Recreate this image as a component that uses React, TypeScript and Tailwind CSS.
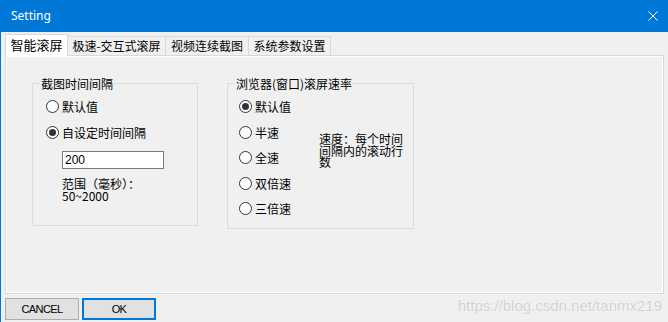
import React from 'react'

const tabs = ['极速-交互式滚屏', '视频连续截图', '系统参数设置']
const tabWidths = ['w-[98px]', 'w-[83px]', 'w-[82px]']

function Radio({ checked, label }: { checked?: boolean; label: string }) {
  return (
    <div className="flex h-[13px] items-center gap-[3px]">
      <span className="flex h-[13px] w-[13px] shrink-0 items-center justify-center rounded-full border border-[#333333] bg-white">
        {checked && <span className="h-[7px] w-[7px] rounded-full bg-[#333333]" />}
      </span>
      <span className="whitespace-nowrap text-[12px] leading-[13px]">{label}</span>
    </div>
  )
}

function GroupBox({ title, className, children }: { title: string; className: string; children: React.ReactNode }) {
  return (
    <div className={'relative shrink-0 border border-[#dcdcdc] ' + className}>
      <span className="absolute left-[7px] top-[-7px] bg-[#f0f0f0] px-[1px] text-[12px] leading-[13px] whitespace-nowrap">
        {title}
      </span>
      {children}
    </div>
  )
}

export default function App() {
  return (
    <div className="flex h-[322px] w-[668px] flex-col overflow-hidden border-l border-[#0078d7] bg-[#f0f0f0] font-['Noto_Sans_CJK_SC',sans-serif] text-black relative">
      {/* title bar */}
      <div className="flex h-[32px] shrink-0 items-center justify-between bg-[#0078d7] pl-[10px] pr-[10px]">
        <span className="font-['Noto_Sans',sans-serif] text-[12px] text-white">Setting</span>
        <svg width="10" height="10" viewBox="0 0 10 10">
          <path d="M0.5 0.5 L9.5 9.5 M9.5 0.5 L0.5 9.5" stroke="white" strokeWidth="1" />
        </svg>
      </div>

      {/* tabs */}
      <div className="mt-[2px] flex h-[21px] shrink-0 items-end pl-[4px]">
        <div className="relative z-10 -mb-px flex h-[22px] w-[63px] items-center justify-center border border-b-0 border-[#d9d9d9] bg-white pb-[1px] text-[13px]">
          智能滚屏
        </div>
        {tabs.map((t, i) => (
          <div
            key={t}
            className={'flex h-[19px] items-center justify-center border-t border-r border-[#d9d9d9] bg-[#f0f0f0] text-[12px] ' + tabWidths[i]}
          >
            {t}
          </div>
        ))}
      </div>

      {/* tab page */}
      <div className="ml-[4px] flex h-[239px] w-[659px] shrink-0 items-start border border-[#d9d9d9] bg-[#f0f0f0] pl-[26px] pt-[27px] shadow-[inset_0_0_0_1px_#ffffff]">
        <GroupBox title="截图时间间隔" className="h-[143px] w-[166px]">
          <div className="flex flex-col pl-[13px] pt-[16px]">
            <Radio label="默认值" />
            <div className="mt-[13px]">
              <Radio checked label="自设定时间间隔" />
            </div>
            <div className="ml-[16px] mt-[12px] flex h-[18px] w-[102px] items-center border border-[#7a7a7a] bg-white px-[2px] font-['Liberation_Sans',sans-serif] text-[12px]">
              200
            </div>
            <div className="ml-[16px] mt-[9px] whitespace-pre-line text-[12px] leading-[12px]">
              {'范围（毫秒）：\n50~2000'}
            </div>
          </div>
        </GroupBox>

        <GroupBox title="浏览器(窗口)滚屏速率" className="ml-[29px] h-[146px] w-[187px]">
          <div className="flex pl-[11px] pt-[16px]">
            <div className="flex w-[80px] flex-col gap-[12.5px]">
              <Radio checked label="默认值" />
              <Radio label="半速" />
              <Radio label="全速" />
              <Radio label="双倍速" />
              <Radio label="三倍速" />
            </div>
            <div className="mt-[33px] w-[86px] text-[12px] leading-[11.5px]">速度：每个时间间隔内的滚动行数</div>
          </div>
        </GroupBox>
      </div>

      {/* buttons */}
      <div className="mt-[4px] flex shrink-0 pl-[4px] font-['Liberation_Sans',sans-serif] text-[11px] tracking-[-0.6px]">
        <button className="flex h-[22px] w-[74px] items-center justify-center border border-[#adadad] bg-[#e1e1e1]">
          CANCEL
        </button>
        <button className="ml-[3px] flex h-[22px] w-[74px] items-center justify-center border-2 border-[#0078d7] bg-[#e1e1e1]">
          OK
        </button>
      </div>

      <span className="absolute bottom-[5px] right-[6px] font-['Liberation_Sans',sans-serif] text-[15px] text-[#d2d2d2] [text-shadow:0_0_1px_#ffffff]">
        https://blog.csdn.net/tanmx219
      </span>
    </div>
  )
}
